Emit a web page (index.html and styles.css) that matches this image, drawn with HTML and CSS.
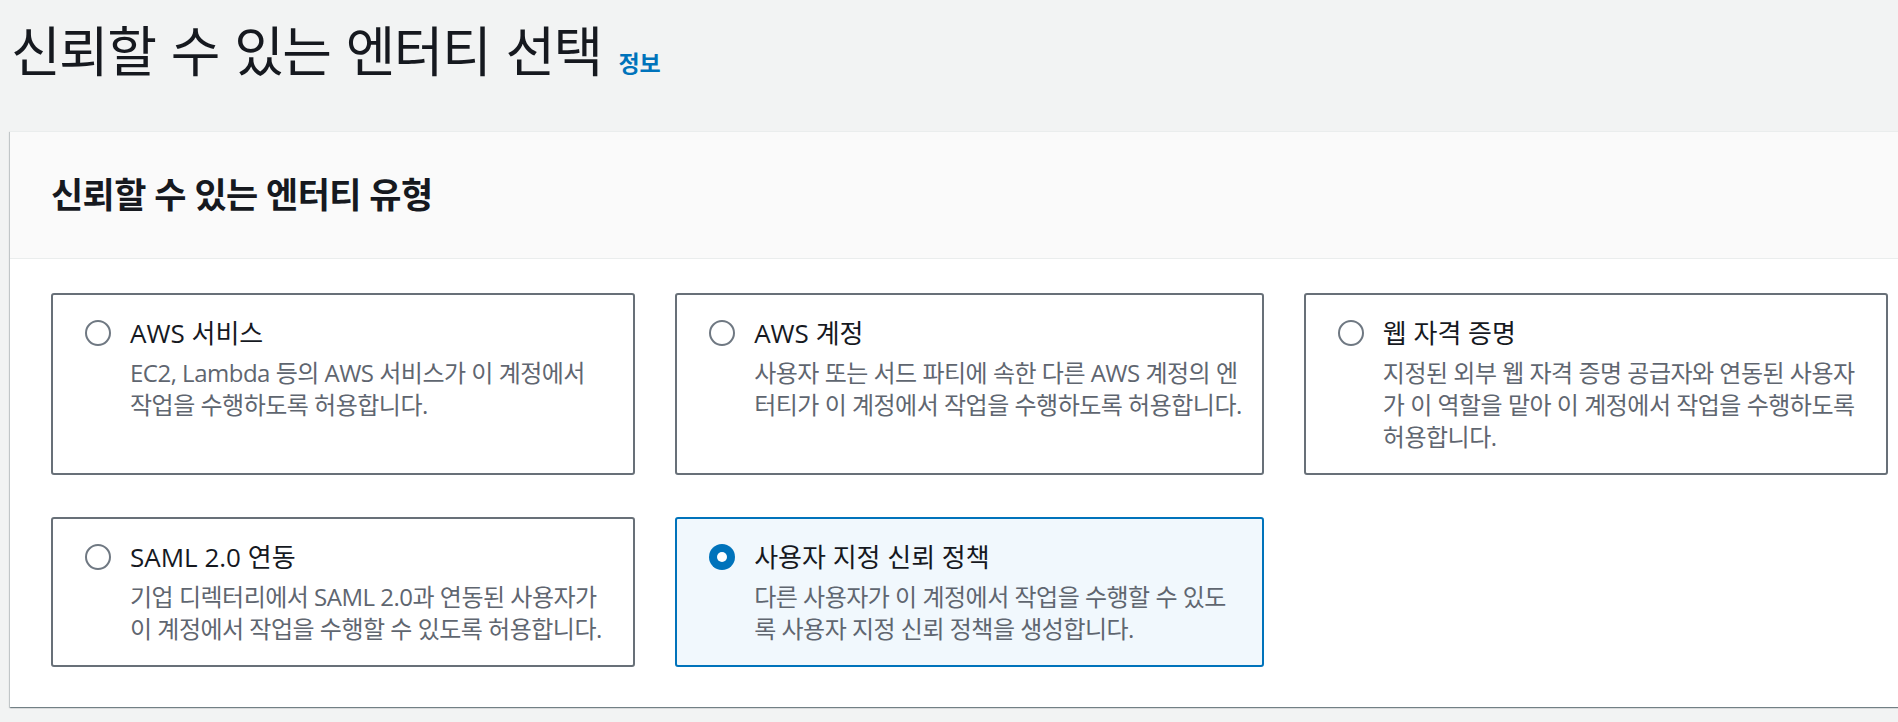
FILE: index.html
```html
<!DOCTYPE html>
<html lang="ko">
<head>
<meta charset="utf-8">
<title>신뢰할 수 있는 엔터티 선택</title>
<link rel="stylesheet" href="styles.css">
</head>
<body>
<div class="page">
  <h1 class="page-title">신뢰할 수 있는 엔터티 선택<a class="info-link" href="#">정보</a></h1>

  <section class="container">
    <header class="container-header">
      <h2 class="container-title">신뢰할 수 있는 엔터티 유형</h2>
    </header>
    <div class="tiles">
      <label class="tile">
        <span class="radio-wrap">
          <svg class="radio" viewBox="0 0 26 26" width="26" height="26"><circle cx="13" cy="13" r="12" fill="#fff" stroke="#6f7882" stroke-width="2"/></svg>
        </span>
        <span class="tile-body">
          <span class="tile-title">AWS 서비스</span>
          <span class="tile-desc">EC2, Lambda 등의 AWS 서비스가 이 계정에서<br>작업을 수행하도록 허용합니다.</span>
        </span>
      </label>

      <label class="tile">
        <span class="radio-wrap">
          <svg class="radio" viewBox="0 0 26 26" width="26" height="26"><circle cx="13" cy="13" r="12" fill="#fff" stroke="#6f7882" stroke-width="2"/></svg>
        </span>
        <span class="tile-body">
          <span class="tile-title">AWS 계정</span>
          <span class="tile-desc">사용자 또는 서드 파티에 속한 다른 AWS 계정의 엔<br>터티가 이 계정에서 작업을 수행하도록 허용합니다.</span>
        </span>
      </label>

      <label class="tile">
        <span class="radio-wrap">
          <svg class="radio" viewBox="0 0 26 26" width="26" height="26"><circle cx="13" cy="13" r="12" fill="#fff" stroke="#6f7882" stroke-width="2"/></svg>
        </span>
        <span class="tile-body">
          <span class="tile-title">웹 자격 증명</span>
          <span class="tile-desc">지정된 외부 웹 자격 증명 공급자와 연동된 사용자<br>가 이 역할을 맡아 이 계정에서 작업을 수행하도록<br>허용합니다.</span>
        </span>
      </label>

      <label class="tile">
        <span class="radio-wrap">
          <svg class="radio" viewBox="0 0 26 26" width="26" height="26"><circle cx="13" cy="13" r="12" fill="#fff" stroke="#6f7882" stroke-width="2"/></svg>
        </span>
        <span class="tile-body">
          <span class="tile-title">SAML 2.0 연동</span>
          <span class="tile-desc">기업 디렉터리에서 SAML 2.0과 연동된 사용자가<br>이 계정에서 작업을 수행할 수 있도록 허용합니다.</span>
        </span>
      </label>

      <label class="tile tile-selected">
        <span class="radio-wrap">
          <svg class="radio" viewBox="0 0 26 26" width="26" height="26"><circle cx="13" cy="13" r="13" fill="#0073bb"/><circle cx="13" cy="13" r="5" fill="#fff"/></svg>
        </span>
        <span class="tile-body">
          <span class="tile-title">사용자 지정 신뢰 정책</span>
          <span class="tile-desc">다른 사용자가 이 계정에서 작업을 수행할 수 있도<br>록 사용자 지정 신뢰 정책을 생성합니다.</span>
        </span>
      </label>
    </div>
  </section>
</div>
</body>
</html>
```

FILE: styles.css
```css
html, body {
  margin: 0;
  padding: 0;
  overflow: hidden;
  background: #f2f3f3;
}

body {
  font-family: "Open Sans", "Noto Sans CJK KR", sans-serif;
  color: #16191f;
  width: 1898px;
  height: 722px;
}

.page {
  display: flex;
  flex-direction: column;
}

.page-title {
  margin: 0;
  padding: 16px 0 0 11px;
  height: 115px;
  box-sizing: border-box;
  font-size: 54px;
  line-height: 70px;
  font-weight: 400;
  letter-spacing: -1.6px;
  word-spacing: 3px;
  color: #16191f;
  white-space: nowrap;
}

.info-link {
  margin-left: 17px;
  font-size: 23px;
  font-weight: 700;
  letter-spacing: -0.3px;
  word-spacing: 0;
  color: #0073bb;
  text-decoration: none;
}

.container {
  margin-left: 10px;
  margin-top: 16px;
  width: 1919px;
  background: #ffffff;
  box-shadow: 0 1px 1px 0 rgba(0, 28, 36, 0.35), 1px 1px 1px 0 rgba(0, 28, 36, 0.15), -1px 1px 1px 0 rgba(0, 28, 36, 0.15);
  border-top: 1px solid #eaeded;
}

.container-header {
  height: 126px;
  display: flex;
  align-items: center;
  padding: 0 41px;
  background: #fafafa;
  border-bottom: 1px solid #eaeded;
}

.container-title {
  margin: 0;
  font-size: 35px;
  line-height: 40px;
  font-weight: 700;
  letter-spacing: -0.6px;
  color: #16191f;
}

.tiles {
  display: grid;
  grid-template-columns: repeat(3, 1fr);
  column-gap: 40px;
  row-gap: 42px;
  padding: 34px 41px 40px 41px;
  align-items: stretch;
}

.tile {
  display: flex;
  gap: 19px;
  padding: 20px 20px 20px 32px;
  border: 2px solid #687078;
  border-radius: 3px;
  background: #ffffff;
  cursor: pointer;
}

.tile-selected {
  border-color: #0073bb;
  background: #f1f8fd;
}

.radio-wrap {
  flex: 0 0 26px;
  height: 36px;
  display: flex;
  align-items: center;
}

.radio {
  display: block;
}

.tile-body {
  display: flex;
  flex-direction: column;
  min-width: 0;
}

.tile-title {
  font-size: 26px;
  line-height: 36px;
  letter-spacing: 0;
  color: #16191f;
  white-space: nowrap;
}

.tile-desc {
  margin-top: 6px;
  font-size: 24px;
  line-height: 32px;
  letter-spacing: -0.5px;
  color: #5f6670;
  white-space: nowrap;
}
```
